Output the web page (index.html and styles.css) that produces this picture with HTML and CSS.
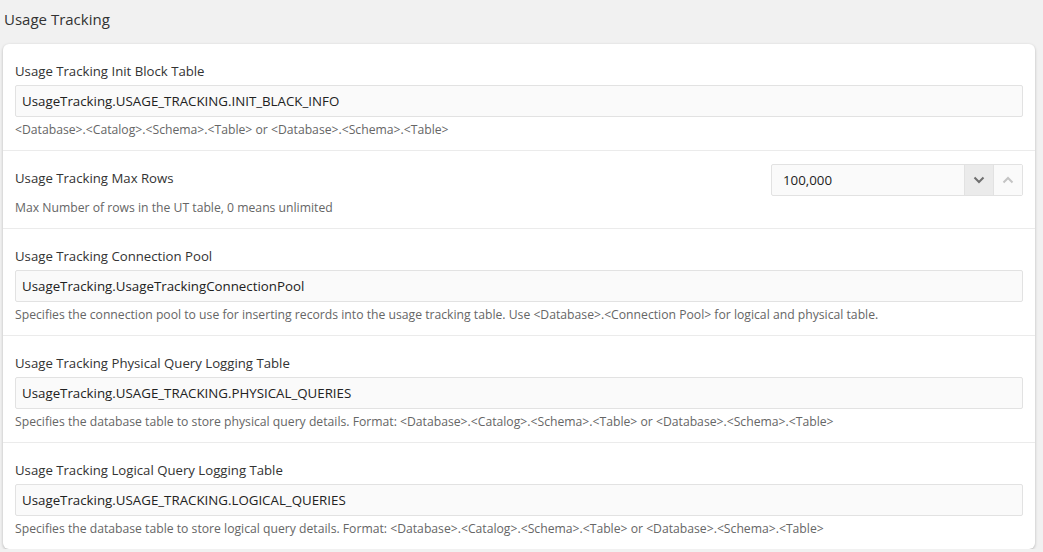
FILE: index.html
```html
<!DOCTYPE html>
<html lang="en">
<head>
  <meta charset="UTF-8">
  <title>Usage Tracking</title>
  <link rel="stylesheet" href="styles.css">
</head>
<body>
  <h1 class="page-title">Usage Tracking</h1>
  <div class="card">
    <!-- Init block table -->
    <div class="field">
      <label class="field-label">Usage Tracking Init Block Table</label>
      <input class="text-input" type="text" value="UsageTracking.USAGE_TRACKING.INIT_BLACK_INFO">
      <div class="hint">&lt;Database&gt;.&lt;Catalog&gt;.&lt;Schema&gt;.&lt;Table&gt; or &lt;Database&gt;.&lt;Schema&gt;.&lt;Table&gt;</div>
    </div>
    <!-- Max rows -->
    <div class="field">
      <div class="field-row">
        <label class="field-label">Usage Tracking Max Rows</label>
        <div class="spinner">
          <input class="spinner-input" type="text" value="100,000">
          <button class="spin-btn spin-down">
            <svg width="12" height="8" viewBox="0 0 12 8"><polyline points="1.5,1.5 6,6 10.5,1.5" fill="none" stroke="#6f6f6f" stroke-width="2"/></svg>
          </button>
          <button class="spin-btn spin-up">
            <svg width="12" height="8" viewBox="0 0 12 8"><polyline points="1.5,6.5 6,2 10.5,6.5" fill="none" stroke="#c4c4c4" stroke-width="2"/></svg>
          </button>
        </div>
      </div>
      <div class="hint">Max Number of rows in the UT table, 0 means unlimited</div>
    </div>
    <!-- Connection pool -->
    <div class="field">
      <label class="field-label">Usage Tracking Connection Pool</label>
      <input class="text-input" type="text" value="UsageTracking.UsageTrackingConnectionPool">
      <div class="hint">Specifies the connection pool to use for inserting records into the usage tracking table. Use &lt;Database&gt;.&lt;Connection Pool&gt; for logical and physical table.</div>
    </div>
    <!-- Physical query table -->
    <div class="field">
      <label class="field-label">Usage Tracking Physical Query Logging Table</label>
      <input class="text-input" type="text" value="UsageTracking.USAGE_TRACKING.PHYSICAL_QUERIES">
      <div class="hint">Specifies the database table to store physical query details. Format: &lt;Database&gt;.&lt;Catalog&gt;.&lt;Schema&gt;.&lt;Table&gt; or &lt;Database&gt;.&lt;Schema&gt;.&lt;Table&gt;</div>
    </div>
    <!-- Logical query table -->
    <div class="field">
      <label class="field-label">Usage Tracking Logical Query Logging Table</label>
      <input class="text-input" type="text" value="UsageTracking.USAGE_TRACKING.LOGICAL_QUERIES">
      <div class="hint">Specifies the database table to store logical query details. Format: &lt;Database&gt;.&lt;Catalog&gt;.&lt;Schema&gt;.&lt;Table&gt; or &lt;Database&gt;.&lt;Schema&gt;.&lt;Table&gt;</div>
    </div>
  </div>
</body>
</html>
```

FILE: styles.css
```css
body {
  margin: 0;
  padding: 0 8px 0 3px;
  background: #f1f1f1;
  font-family: "Open Sans", "Noto Sans", Arial, sans-serif;
  color: #333;
}
.page-title {
  margin: 0;
  padding: 9px 0 0 1px;
  height: 35px;
  font-size: 15px;
  font-weight: normal;
  line-height: 20px;
  color: #333;
}
.card {
  background: #fff;
  border-radius: 6px;
  box-shadow: 0 1px 3px rgba(0, 0, 0, 0.25);
}
.field {
  padding: 17px 12px 11px 12px;
  border-bottom: 1px solid #ebebeb;
}
.field:last-child {
  border-bottom: none;
}
.field-label {
  display: block;
  font-size: 13.2px;
  line-height: 20px;
  margin-bottom: 4px;
  color: #333;
}
.field-row {
  display: flex;
  align-items: flex-start;
  justify-content: space-between;
  margin-top: -4px;
  margin-bottom: -1px;
}
.field-row .field-label {
  margin: 4px 0 0 0;
}
.text-input {
  display: block;
  box-sizing: border-box;
  width: 100%;
  height: 32px;
  margin: 0;
  padding: 0 6px;
  border: 1px solid #e2e2e2;
  border-radius: 2px;
  background: #fafafa;
  font-family: inherit;
  font-size: 13.3px;
  color: #222;
}
.hint {
  margin-top: 4px;
  font-size: 12.2px;
  line-height: 18px;
  color: #666;
}
.spinner {
  display: flex;
  width: 252px;
  height: 32px;
  box-sizing: border-box;
  border: 1px solid #e2e2e2;
  border-radius: 2px;
  background: #fafafa;
}
.spinner-input {
  flex: 1;
  min-width: 0;
  border: none;
  background: transparent;
  padding: 0 11px;
  font-family: inherit;
  font-size: 13.3px;
  color: #222;
}
.spin-btn {
  width: 29px;
  border: none;
  border-left: 1px solid #e2e2e2;
  background: #fafafa;
  padding: 0;
  display: flex;
  align-items: center;
  justify-content: center;
}
.spin-down {
  background: #ebebeb;
}
```
